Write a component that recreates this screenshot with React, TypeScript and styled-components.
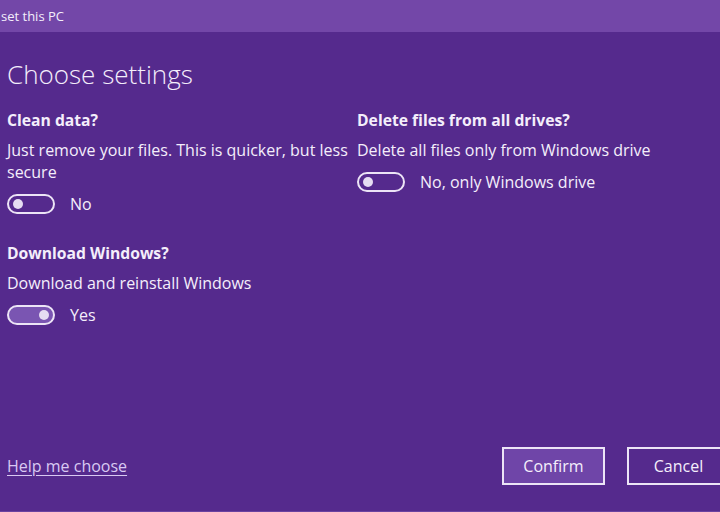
import * as React from 'react';
import styled, { createGlobalStyle } from 'styled-components';

const GlobalStyle = createGlobalStyle`
    html, body {
        margin: 0;
        padding: 0;
        background: #552a8d;
    }
    * {
        box-sizing: border-box;
    }
`;

const Window = styled.div`
    width: 720px;
    height: 512px;
    display: flex;
    flex-direction: column;
    overflow: hidden;
    background: #552a8d;
    color: #f4eefb;
    font-family: 'Open Sans', 'Noto Sans', sans-serif;
    border-bottom: 1px solid #6a42a0;
`;

const TitleBar = styled.div`
    height: 32px;
    flex-shrink: 0;
    display: flex;
    align-items: center;
    padding-left: 1px;
    background: #7347a8;
    font-size: 13px;
    color: #f4eefb;
`;

const Content = styled.div`
    flex: 1;
    display: flex;
    flex-direction: column;
    padding: 24px 0 26px 7px;
`;

const Title = styled.h1`
    margin: 0 0 18px;
    font-size: 26px;
    font-weight: 300;
    line-height: 36px;
`;

const Columns = styled.div`
    display: grid;
    grid-template-columns: 350px 1fr;
    align-items: start;
`;

const Column = styled.div`
    display: flex;
    flex-direction: column;
    gap: 28px;
`;

const Setting = styled.div`
    display: flex;
    flex-direction: column;
`;

const Heading = styled.div`
    font-size: 15.7px;
    font-weight: 700;
    line-height: 20px;
    margin-bottom: 9px;
`;

const Description = styled.div`
    font-size: 16px;
    line-height: 22px;
    margin-bottom: 10px;
`;

const ToggleRow = styled.div`
    display: flex;
    align-items: center;
    gap: 15px;
    font-size: 16px;
`;

const Track = styled.span<{ $on: boolean }>`
    width: 48px;
    height: 20px;
    border-radius: 10px;
    border: 2px solid #ece4f6;
    background: ${props => props.$on ? '#7a55b2' : 'transparent'};
    display: flex;
    align-items: center;
    justify-content: ${props => props.$on ? 'flex-end' : 'flex-start'};
    padding: 0 4px;
`;

const Knob = styled.span`
    width: 10px;
    height: 10px;
    border-radius: 50%;
    background: #e6ddf2;
`;

const Footer = styled.div`
    margin-top: auto;
    display: flex;
    align-items: center;
    justify-content: space-between;
    margin-right: -10px;
`;

const HelpLink = styled.a`
    color: #d9c9f2;
    font-size: 16px;
    text-decoration: underline;
    text-underline-offset: 3px;
`;

const Buttons = styled.div`
    display: flex;
    gap: 22px;
`;

const Button = styled.button<{ $primary?: boolean }>`
    width: 103px;
    height: 38px;
    border: 2px solid #ece4f6;
    background: ${props => props.$primary ? '#6f45a8' : 'transparent'};
    color: #f4eefb;
    font-family: inherit;
    font-size: 16px;
    padding: 0;
`;

const Toggle = ({ on, label }: { on: boolean; label: string }) => (
    <ToggleRow>
        <Track $on={on}><Knob /></Track>
        <span>{label}</span>
    </ToggleRow>
);

const App = () => {
    return (
        <>
            <GlobalStyle />
            <Window>
                <TitleBar>set this PC</TitleBar>
                <Content>
                    <Title>Choose settings</Title>
                    <Columns>
                        <Column>
                            <Setting>
                                <Heading>Clean data?</Heading>
                                <Description>Just remove your files. This is quicker, but less secure</Description>
                                <Toggle on={false} label='No' />
                            </Setting>
                            <Setting>
                                <Heading>Download Windows?</Heading>
                                <Description>Download and reinstall Windows</Description>
                                <Toggle on={true} label='Yes' />
                            </Setting>
                        </Column>
                        <Column>
                            <Setting>
                                <Heading>Delete files from all drives?</Heading>
                                <Description>Delete all files only from Windows drive</Description>
                                <Toggle on={false} label='No, only Windows drive' />
                            </Setting>
                        </Column>
                    </Columns>
                    <Footer>
                        <HelpLink href='#'>Help me choose</HelpLink>
                        <Buttons>
                            <Button $primary>Confirm</Button>
                            <Button>Cancel</Button>
                        </Buttons>
                    </Footer>
                </Content>
            </Window>
        </>
    );
};

export default App;
